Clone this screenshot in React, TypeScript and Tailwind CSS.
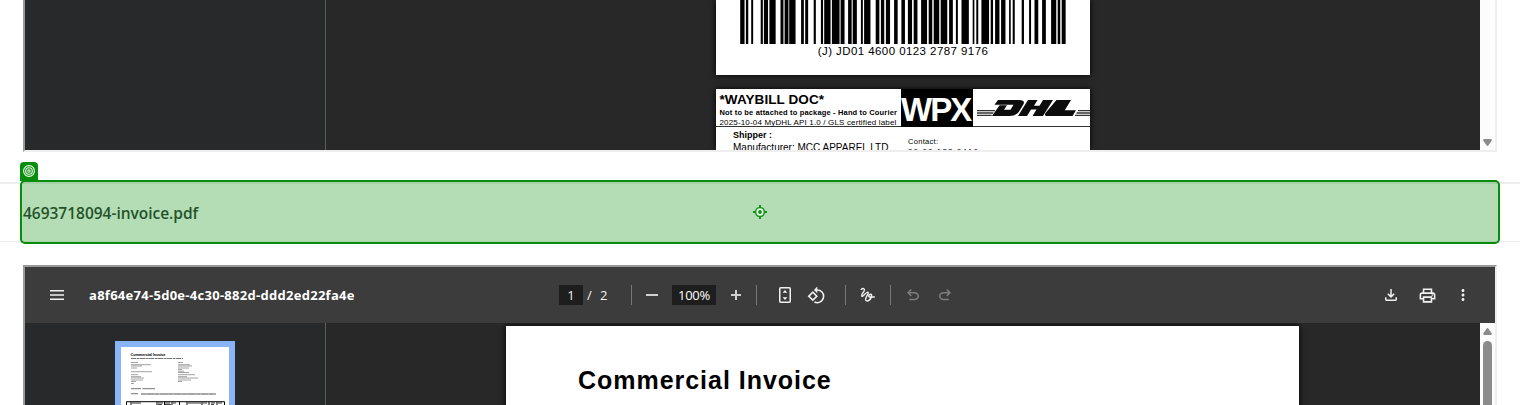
import React from "react";
import { MdOutlinePrint, MdRotate90DegreesCcw, MdMoreVert } from "react-icons/md";

const BARS: [number, number][] = [
  [740.3, 4], [746, 2], [751.3, 1.6], [760.8, 1.8], [764, 3.8], [769.5, 5.9], [780.6, 2.6], [784.7, 3.5],
  [789.3, 6], [801.2, 2.4], [805.3, 2.6], [813.8, 1.8], [821, 1.8], [824.3, 6], [832, 7.3], [840.7, 3.6],
  [848.2, 3.2], [852.8, 3.8], [861, 1.6], [864.2, 6], [875.8, 3.3], [881, 3], [886, 3.8], [894.2, 3.2],
  [901.5, 3.2], [908, 3.8], [913.8, 3.4], [921.2, 5.6], [928.8, 3.2], [933.8, 5.2], [940.8, 6.2], [949.2, 3.4],
  [956, 1.6], [961.6, 7], [972.8, 1.3], [976.4, 1.6], [981.5, 7.3], [990.8, 2], [995.2, 4], [1001.2, 4],
  [1009.2, 1.3], [1012.8, 1.7], [1021.8, 1.9], [1029.2, 1.6], [1034.6, 3.4], [1042.2, 3.4], [1051.2, 4.8],
  [1057.8, 2.2], [1061.8, 3.6],
];

function Barcode() {
  return (
    <svg className="block h-11 w-[374px]" viewBox="716 0 374 44">
      {BARS.map(([x, w]) => (
        <rect key={x} x={x - 0.1} y="0" width={w + 0.35} height="44" fill="#000" />
      ))}
    </svg>
  );
}

function DhlLogo() {
  return (
    <svg className="mt-[10px] ml-1 block h-[18px] w-[113px]" viewBox="0 0 113 18">
      <g fill="#0c0c0c">
        <path d="M21 1H42C47 1 48 3 46 6L43 11C41 14.5 38 17 32 17H15L22.6 6.2H30L27 10.8H33.5L36.5 5.7H17.5Z" />
        <path d="M51 1H60.5L57 6.8H62.5L66 1H76L66 17H55.5L59.5 10.6H54L50 17H41Z" />
        <path d="M79.5 1H94L87.8 11.2H99L95.5 17H69.5Q67 16.5 68.5 14Z" />
      </g>
      <g stroke="#333" strokeWidth="1.3">
        <path d="M0 11.7H18M0 14H16.4M0 16.3H14.7M101 11.7H113M99.5 14H113M98 16.3H113" />
      </g>
    </svg>
  );
}

const UNDO =
  "M280-200v-80h284q63 0 109.5-40T720-420q0-60-46.5-100T564-560H312l104 104-56 56-200-200 200-200 56 56-104 104h252q97 0 166.5 63T800-420q0 94-69.5 157T564-200H280Z";
const DOWNLOAD =
  "M480-320 280-520l56-58 104 104v-326h80v326l104-104 56 58-200 200ZM240-160q-33 0-56.5-23.5T160-240v-120h80v120h480v-120h80v120q0 33-23.5 56.5T720-160H240Z";

function Symbol({ d, className }: { d: string; className: string }) {
  return (
    <svg className={className} viewBox="0 -960 960 960" fill="currentColor">
      <path d={d} />
    </svg>
  );
}

function Divider() {
  return <span className="h-5 w-px shrink-0 bg-[#777]" />;
}

function Toolbar() {
  return (
    <div className="flex h-14 items-center bg-[#3c3c3c] font-['Open_Sans','Noto_Sans',sans-serif] text-[#f1f1f1]">
      <svg className="ml-[25px] h-[10px] w-[14px] shrink-0" viewBox="0 0 14 10">
        <path d="M0 .7H14M0 9.3H14" stroke="#f1f1f1" strokeWidth="1.4" />
        <path d="M0 5H14" stroke="#c4c4c4" strokeWidth="2" />
      </svg>
      <div className="ml-[25px] w-[470px] shrink-0 pt-[2px] text-[13px] font-bold tracking-[0.28px] whitespace-nowrap text-white">
        a8f64e74-5d0e-4c30-882d-ddd2ed22fa4e
      </div>
      <div className="flex w-[72px] shrink-0 items-center text-[13px]">
        <span className="flex h-5 w-6 items-center justify-center bg-[#1e1e1e] pt-px">1</span>
        <span className="ml-1 w-[13px] pt-px">/</span>
        <span className="pt-px">2</span>
      </div>
      <Divider />
      <svg className="ml-[14px] size-3 shrink-0" viewBox="0 0 12 12">
        <path d="M0 6H12" stroke="#d0d0d0" strokeWidth="2" />
      </svg>
      <span className="mx-[14px] flex h-5 w-11 shrink-0 items-center justify-center bg-[#1e1e1e] pt-px text-[13px] tracking-[-0.3px] text-white">
        100%
      </span>
      <svg className="mr-[14px] size-3 shrink-0" viewBox="0 0 12 12">
        <path d="M1 6H11M6 1V11" stroke="#d0d0d0" strokeWidth="2" />
      </svg>
      <Divider />
      <svg className="ml-[22px] h-4 w-3 shrink-0" viewBox="0 0 12 16">
        <rect x=".75" y=".75" width="10.5" height="14.5" rx="1" fill="none" stroke="currentColor" strokeWidth="1.5" />
        <path d="M6 3 8.4 5.7H3.6ZM6 13 8.4 10.3H3.6Z" fill="currentColor" />
      </svg>
      <MdRotate90DegreesCcw className="mr-[19px] ml-4 size-[19px] shrink-0" />
      <Divider />
      <svg className="mr-[15px] ml-[14px] h-4 w-[15px] shrink-0" viewBox="0 0 15 16" fill="none">
        <path
          d="M1.2 2.4C2.6 .8 5 1.4 4.3 3.6C3.7 5.4 1 7.4 1.6 9C2.5 11 6.2 4.2 8 5.2C9.5 6.4 4.9 10.2 5.6 13C7 15.8 12 12.4 11.6 7.8C10.6 6 7.2 9.4 9.6 10H14.3"
          stroke="currentColor"
          strokeWidth="1.4"
          strokeLinecap="round"
        />
      </svg>
      <Divider />
      <Symbol d={UNDO} className="ml-[13px] size-[18px] shrink-0 text-[#7e7e7e]" />
      <Symbol d={UNDO} className="ml-[14px] size-[18px] shrink-0 -scale-x-100 text-[#7e7e7e]" />
      <div className="mr-[23px] ml-auto flex items-center">
        <Symbol d={DOWNLOAD} className="size-[18px]" />
        <MdOutlinePrint className="mr-[17px] ml-[18px] size-[19px]" />
        <MdMoreVert className="size-[18px]" />
      </div>
    </div>
  );
}

function Thumbnail() {
  return (
    <div className="mt-[18px] ml-[90px] h-40 w-[120px] border-[6px] border-[#8ab4f8] bg-white">
      <svg className="block h-[120px] w-[108px]" viewBox="121 347 108 120">
        <text x="130.5" y="356" fontFamily="Liberation Sans" fontWeight="700" fontSize="3.9" textLength="35">
          Commercial Invoice
        </text>
        <g stroke="#333" strokeWidth=".6" opacity=".75" fill="none">
          <path d="M131 358.5H183" strokeWidth=".9" strokeDasharray="5 .6 3 .4" />
          <path d="M131 362.5H138M178 362.5H183M131 364.7H151M178 364.7H190M131 366H142M178 366H192M131 368H137M178 368H189M178 369.5H182M131 371.7H152M178 371.2H184M178 372.5H189M131 374.7H138M178 374.7H195M131 376.7H141M178 376.7H187M131 378H144M178 378H198M131 380H143M178 380H191M131 381.5H136M178 381.5H182M131 383.5H134" />
          <path d="M131 388.7H141M142.5 388.7H155M131 393.7H138" strokeWidth=".9" />
        </g>
        <path d="M141 394H216" stroke="#222" strokeWidth="1.2" strokeDasharray="5 .3 8 .3" opacity=".8" />
        <path d="M126.5 420V401.7H224.5V420M131 402V420M157 402V420M164.5 402V420M172 402V420M179.5 402V420M187 402V420M202 402V420M209 402V420M217 402V420" stroke="#000" strokeWidth="1" fill="none" />
        <path d="M132 403H141M158 403H163M165 403H170M173 403H176M188 403H201M203 403H207M211 403H215M218 403H222M158 404.6H162M165 404.6H171M211 404.6H214" stroke="#222" strokeWidth=".9" />
      </svg>
    </div>
  );
}

function Waybill() {
  return (
    <div className="mt-[14px] h-[61px] bg-white shadow-[0_0_6px_#000]">
      <div className="flex h-[38px] border-b border-[#333]">
        <div className="w-[185px] shrink-0 pl-[3.5px] whitespace-nowrap">
          <div className="mt-[3px] h-4 text-[13.5px] leading-[15px] font-bold tracking-[0.08px]">*WAYBILL DOC*</div>
          <div className="h-[10px] text-[7.5px] leading-[10px] font-bold tracking-[0.16px]">
            Not to be attached to package - Hand to Courier
          </div>
          <div className="h-[9px] text-[8px] leading-[9px] tracking-[0.16px]">
            2025-10-04 MyDHL API 1.0 / GLS certified label
          </div>
        </div>
        <div className="h-[38px] w-[72px] shrink-0 bg-black text-[33px] leading-[41px] font-bold tracking-[-2px] text-white">
          WPX
        </div>
        <DhlLogo />
      </div>
      <div className="flex whitespace-nowrap">
        <div className="w-[192px] shrink-0 pl-[17px]">
          <div className="mt-[3px] h-[12px] text-[9px] leading-[11px] font-bold">Shipper :</div>
          <div className="text-[10px] leading-[12px]">Manufacturer: MCC APPAREL LTD</div>
        </div>
        <div>
          <div className="mt-[10px] h-[9px] text-[7.5px] leading-[9px] tracking-[0.3px]">Contact:</div>
          <div className="text-[8px] leading-[11px] tracking-[1.1px]">00 00 123 0416</div>
        </div>
      </div>
    </div>
  );
}

export default function App() {
  return (
    <div className="h-[405px] w-[1520px] overflow-hidden bg-white font-['Liberation_Sans',Arial,sans-serif] text-black">
      <div className="ml-[23px] flex h-[152px] w-[1474px] overflow-hidden border-2 border-t-0 border-[#eee] border-l-[#999] bg-[#282828]">
        <div className="w-[301px] shrink-0 border-r border-[#5c5c5c] bg-[#28292a]" />
        <div className="flex flex-1 pl-[390px]">
          <div className="w-[374px]">
            <div className="h-[75px] bg-white shadow-[0_0_6px_#000]">
              <Barcode />
              <div className="h-[14px] text-center text-[11.5px] leading-[14px] tracking-[0.43px] whitespace-nowrap">
                (J) JD01 4600 0123 2787 9176
              </div>
            </div>
            <Waybill />
          </div>
        </div>
        <div className="flex w-[15px] items-end justify-center bg-[#fcfcfc] pb-1">
          <svg className="h-[7px] w-[9px]" viewBox="0 0 9 7">
            <path d="M1 0H8Q9.3.3 8.5 2L5.5 6.3Q4.5 7.5 3.5 6.3L.5 2Q-.3.3 1 0Z" fill="#8b8b8b" />
          </svg>
        </div>
      </div>

      <div className="relative mt-[30px] flex h-[60px] items-center border-t-2 border-b border-t-[#eee] border-b-[#eee] pl-[23px]">
        <div className="pt-[3px] font-['Open_Sans','Noto_Sans',sans-serif] text-[15.5px] font-semibold tracking-[-0.02px] text-[#303936]">
          4693718094-invoice.pdf
        </div>
        <div className="absolute -top-[4px] left-5 flex h-16 w-[1480px] items-center justify-center rounded-[5px] border-2 border-[#058d0b] bg-[rgba(8,142,12,0.3)]">
          <svg className="size-[14px]" viewBox="0 0 14 14">
            <circle cx="7" cy="7" r="4.4" fill="#e5f7e5" stroke="#15921a" strokeWidth="1.5" />
            <circle cx="7" cy="7" r="1.9" fill="#15921a" />
            <path d="M7 0V2.5M7 11.5V14M0 7H2.5M11.5 7H14" stroke="#15921a" strokeWidth="2" />
          </svg>
        </div>
        <div className="absolute -top-[22px] left-5 flex h-[19px] w-[18px] justify-center rounded-t-[4px] bg-[#058d0b] pt-[3px]">
          <svg className="size-3" viewBox="0 0 12 12" fill="none" stroke="#f0fbf0" strokeWidth="1.1">
            <circle cx="6" cy="6" r="5.4" />
            <circle cx="6" cy="6" r="3.3" />
            <circle cx="6" cy="6" r="1.2" />
          </svg>
        </div>
      </div>

      <div className="mt-[23px] ml-[23px] h-[160px] w-[1474px] border-2 border-b-0 border-[#999] border-r-[#eee]">
        <Toolbar />
        <div className="flex h-[104px] overflow-hidden bg-[#282828]">
          <div className="w-[301px] shrink-0 border-r border-[#5c5c5c] bg-[#28292a]">
            <Thumbnail />
          </div>
          <div className="flex-1 overflow-hidden pt-[3px] pl-[180px]">
            <div className="h-40 w-[793px] bg-white pt-[39px] pl-[72px] shadow-[0_0_6px_#000]">
              <h1 className="text-[25px] leading-[30px] font-bold tracking-[0.97px] whitespace-nowrap">Commercial Invoice</h1>
            </div>
          </div>
          <div className="flex w-[15px] flex-col items-center bg-[#fcfcfc] pt-[5px]">
            <svg className="h-[7px] w-[9px] shrink-0" viewBox="0 0 9 7">
              <path d="M1 7H8Q9.3 6.7 8.5 5L5.5.7Q4.5-.5 3.5.7L.5 5Q-.3 6.7 1 7Z" fill="#8b8b8b" />
            </svg>
            <div className="mt-[6px] h-40 w-[9px] shrink-0 rounded-full bg-[#8b8b8b]" />
          </div>
        </div>
      </div>
    </div>
  );
}
